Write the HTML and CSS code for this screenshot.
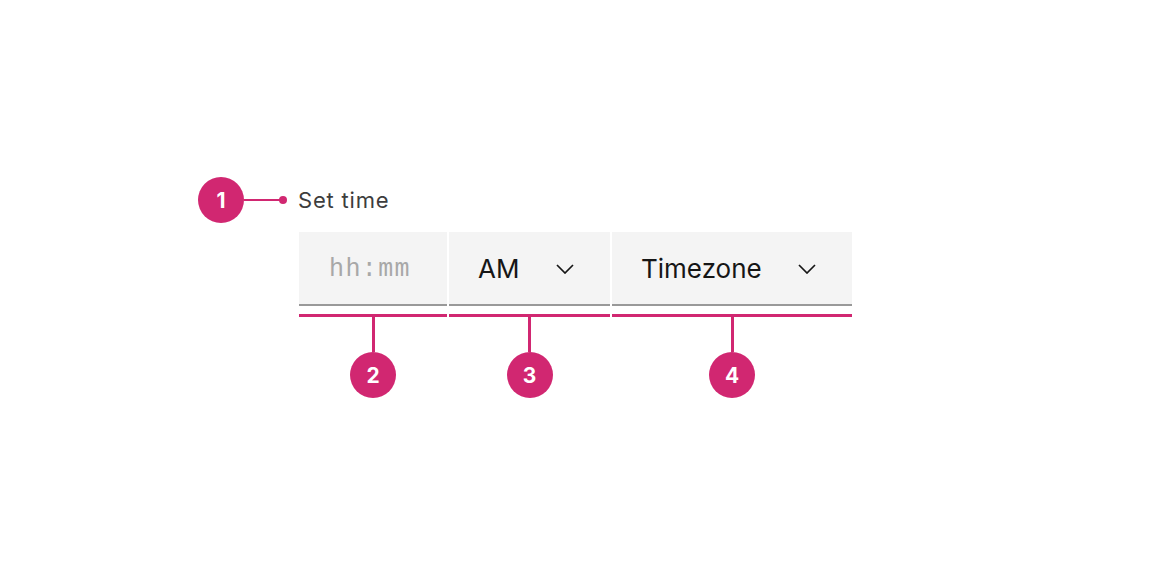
FILE: index.html
```html
<!DOCTYPE html>
<html lang="en">
<head>
<meta charset="utf-8">
<title>Time picker anatomy</title>
<link rel="stylesheet" href="styles.css">
</head>
<body>
<div class="diagram">
  <div class="label-row">
    <span class="badge">1</span>
    <span class="leader"><span class="leader-line"></span><span class="leader-dot"></span></span>
    <span class="label">Set time</span>
  </div>
  <div class="fields">
    <div class="part part-time">
      <div class="field field-input"><span class="placeholder">hh:mm</span></div>
      <div class="marker"></div>
      <div class="stem"></div>
      <span class="badge">2</span>
    </div>
    <div class="part part-period">
      <div class="field field-select">
        <span class="value">AM</span>
        <svg class="chevron" viewBox="0 0 18 10" width="18" height="10" aria-hidden="true"><path d="M1 1 L9 9 L17 1" /></svg>
      </div>
      <div class="marker"></div>
      <div class="stem"></div>
      <span class="badge">3</span>
    </div>
    <div class="part part-zone">
      <div class="field field-select">
        <span class="value">Timezone</span>
        <svg class="chevron" viewBox="0 0 18 10" width="18" height="10" aria-hidden="true"><path d="M1 1 L9 9 L17 1" /></svg>
      </div>
      <div class="marker"></div>
      <div class="stem"></div>
      <span class="badge">4</span>
    </div>
  </div>
</div>
</body>
</html>
```

FILE: styles.css
```css
html, body {
  margin: 0;
  padding: 0;
  background: #ffffff;
}

body {
  font-family: Inter, "Noto Sans", "Liberation Sans", sans-serif;
  color: #161616;
}

.diagram {
  padding: 177px 0 0 198px;
}

/* numbered callout bubble */
.badge {
  display: flex;
  align-items: center;
  justify-content: center;
  width: 46px;
  height: 46px;
  border-radius: 50%;
  background: #d12771;
  color: #ffffff;
  font-family: Inter, "Liberation Sans", sans-serif;
  font-weight: 700;
  font-size: 21px;
  flex: none;
}

/* label row */
.label-row {
  display: flex;
  align-items: center;
  height: 46px;
}

.leader {
  display: flex;
  align-items: center;
  width: 43px;
}

.leader-line {
  flex: 1;
  height: 2px;
  background: #d12771;
}

.leader-dot {
  width: 8px;
  height: 8px;
  border-radius: 50%;
  background: #d12771;
  margin-left: -1px;
}

.label {
  margin-left: 11px;
  font-size: 22px;
  letter-spacing: 0.8px;
  color: #3d3d3d;
  line-height: 1;
}

/* input row */
.fields {
  display: flex;
  gap: 2px;
  margin: 9px 0 0 101px;
}

.part {
  display: flex;
  flex-direction: column;
  align-items: center;
}

.part-time { width: 148px; }
.part-period { width: 161px; }
.part-zone { width: 240px; }

.field {
  box-sizing: border-box;
  width: 100%;
  height: 74px;
  background: #f4f4f4;
  border-bottom: 2px solid #999999;
  display: flex;
  align-items: center;
}

.field-input {
  padding-left: 30px;
}

.placeholder {
  font-family: "Liberation Mono", "DejaVu Sans Mono", monospace;
  font-size: 25px;
  letter-spacing: 1.4px;
  color: #a8a8a8;
  margin-top: 2px;
}

.field-select {
  justify-content: space-between;
  padding: 0 36px 0 29px;
}

.value {
  font-size: 26px;
  color: #161616;
}

.chevron {
  display: block;
  margin-top: 2px;
}

.chevron path {
  fill: none;
  stroke: #161616;
  stroke-width: 1.7;
}

/* magenta callout bracket under each field */
.marker {
  width: 100%;
  height: 3px;
  margin-top: 8px;
  background: #d12771;
}

.stem {
  width: 3px;
  height: 35px;
  background: #d12771;
}
```
